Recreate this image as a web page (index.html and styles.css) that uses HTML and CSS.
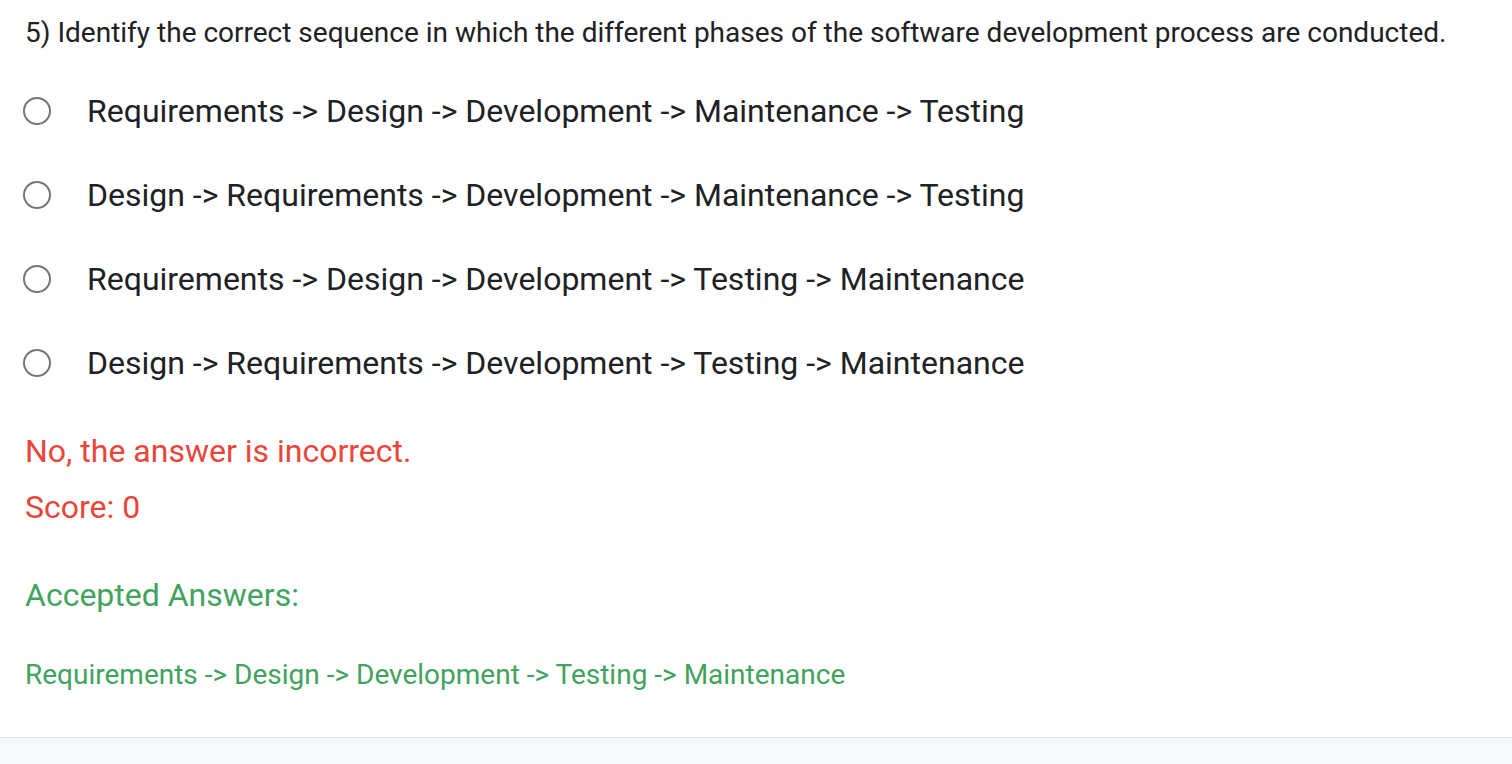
FILE: index.html
```html
<!DOCTYPE html>
<html>
<head>
<meta charset="utf-8">
<link rel="stylesheet" href="styles.css">
</head>
<body>
<div class="card">
  <div class="question">5) Identify the correct sequence in which the different phases of the software development process are conducted.</div>
  <div class="options">
    <div class="option"><span class="radio"></span><span class="label">Requirements -&gt; Design -&gt; Development -&gt; Maintenance -&gt; Testing</span></div>
    <div class="option"><span class="radio"></span><span class="label">Design -&gt; Requirements -&gt; Development -&gt; Maintenance -&gt; Testing</span></div>
    <div class="option"><span class="radio"></span><span class="label">Requirements -&gt; Design -&gt; Development -&gt; Testing -&gt; Maintenance</span></div>
    <div class="option"><span class="radio"></span><span class="label">Design -&gt; Requirements -&gt; Development -&gt; Testing -&gt; Maintenance</span></div>
  </div>
  <div class="result">No, the answer is incorrect.</div>
  <div class="score">Score: 0</div>
  <div class="accepted">Accepted Answers:</div>
  <div class="answer">Requirements -&gt; Design -&gt; Development -&gt; Testing -&gt; Maintenance</div>
</div>
<div class="footer"></div>
</body>
</html>
```
FILE: styles.css
```css
html, body {
  margin: 0;
  padding: 0;
  background: #f8f9fa;
  font-family: Roboto, "Noto Sans", sans-serif;
}
.card {
  background: #fff;
  height: 738px;
  border-bottom: 1px solid #e3e3e3;
  box-sizing: border-box;
  padding: 15px 0 0 25px;
}
.question {
  font-size: 28px;
  line-height: 36px;
  color: #202124;
}
.options {
  display: flex;
  flex-direction: column;
  margin-top: 18px;
}
.option {
  display: flex;
  align-items: center;
  height: 84px;
}
.radio {
  width: 24px;
  height: 24px;
  border: 2px solid #757575;
  border-radius: 50%;
  margin-left: -2px;
  margin-right: 36px;
  flex: none;
}
.label {
  font-size: 32px;
  color: #202124;
}
.result {
  font-size: 32px;
  line-height: 40px;
  margin-top: 26px;
  color: #e94539;
}
.score {
  font-size: 32px;
  line-height: 40px;
  margin-top: 16px;
  color: #e94539;
}
.accepted {
  font-size: 32px;
  line-height: 40px;
  margin-top: 48px;
  color: #41a35d;
}
.answer {
  font-size: 28px;
  line-height: 36px;
  margin-top: 42px;
  color: #41a35d;
}
```
